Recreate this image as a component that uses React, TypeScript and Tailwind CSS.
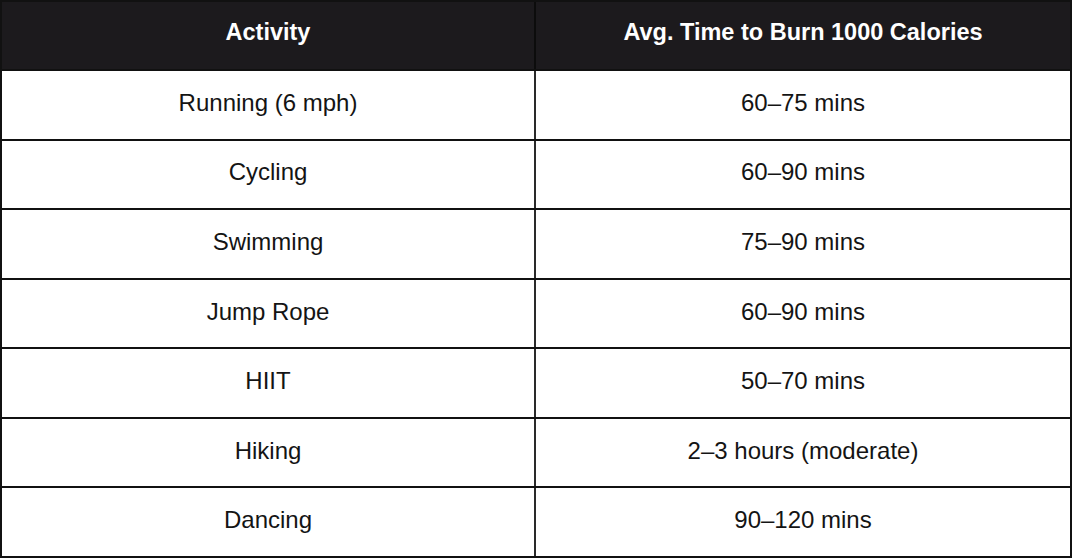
const rows = [
  { activity: "Running (6 mph)", time: "60–75 mins" },
  { activity: "Cycling", time: "60–90 mins" },
  { activity: "Swimming", time: "75–90 mins" },
  { activity: "Jump Rope", time: "60–90 mins" },
  { activity: "HIIT", time: "50–70 mins" },
  { activity: "Hiking", time: "2–3 hours (moderate)" },
  { activity: "Dancing", time: "90–120 mins" },
];

export default function App() {
  return (
    <div className="h-[558px] w-[1073px] bg-white font-['Liberation_Sans',Arial,sans-serif]">
      <div className="flex h-[558px] w-[1072px] flex-col border-2 border-[#111]">
        <div className="grid h-[69px] shrink-0 grid-cols-[534px_1fr] border-b-2 border-[#111] bg-[#1c1a1d] text-[23.5px] font-bold text-white">
          <div className="flex items-center justify-center border-r-2 border-[#0c0c0c] pb-1.5">
            Activity
          </div>
          <div className="flex items-center justify-center pb-1.5">
            Avg. Time to Burn 1000 Calories
          </div>
        </div>
        {rows.map((r, i) => (
          <div
            key={r.activity}
            className={`grid flex-1 grid-cols-[534px_1fr] text-[24px] text-[#141414] ${
              i < rows.length - 1 ? "border-b-2 border-[#111]" : ""
            }`}
          >
            <div className="flex items-center justify-center border-r-2 border-[#2a2a2a] pb-1">
              {r.activity}
            </div>
            <div className="flex items-center justify-center pb-1">{r.time}</div>
          </div>
        ))}
      </div>
    </div>
  );
}
